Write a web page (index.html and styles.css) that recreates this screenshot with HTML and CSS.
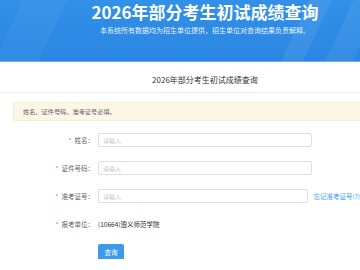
FILE: index.html
```html
<!DOCTYPE html>
<html lang="zh-CN">
<head>
<meta charset="utf-8">
<title>2026年部分考生初试成绩查询</title>
<link rel="stylesheet" href="styles.css">
</head>
<body>
<div class="page">
  <header class="banner">
    <h1 class="banner-title">2026年部分考生初试成绩查询</h1>
    <p class="banner-sub">本系统所有数据均为招生单位提供，招生单位对查询结果负责解释。</p>
  </header>
  <div class="card-title">2026年部分考生初试成绩查询</div>
  <div class="alert">姓名、证件号码、准考证号必填。</div>
  <form class="form">
    <div class="row">
      <label class="label"><span class="req">*</span>姓名：</label>
      <input class="input" type="text" placeholder="请输入">
    </div>
    <div class="row">
      <label class="label"><span class="req">*</span>证件号码：</label>
      <input class="input" type="text" placeholder="请输入">
    </div>
    <div class="row">
      <label class="label"><span class="req">*</span>准考证号：</label>
      <input class="input" type="text" placeholder="请输入">
      <a class="link" href="#">忘记准考证号(?)</a>
    </div>
    <div class="row">
      <label class="label"><span class="req">*</span>报考单位：</label>
      <span class="value">(10664)遵义师范学院</span>
    </div>
    <div class="row">
      <span class="label"></span>
      <button class="btn" type="button">查询</button>
    </div>
  </form>
</div>
</body>
</html>
```
FILE: styles.css
```css
html, body {
  margin: 0;
  padding: 0;
  background: #fff;
  overflow: hidden;
  font-family: "Noto Sans CJK SC", "Noto Sans", sans-serif;
}
.page {
  width: 360px;
  overflow: hidden;
}
.banner {
  height: 62px;
  box-sizing: border-box;
  padding: 3px 0 0 50px;
  text-align: center;
  color: #fff;
  background:
    linear-gradient(115deg, rgba(255,255,255,0) 0, rgba(255,255,255,0) 280px, rgba(255,255,255,0.07) 281px, rgba(255,255,255,0.07) 300px, rgba(255,255,255,0) 301px),
    linear-gradient(115deg, rgba(255,255,255,0) 0, rgba(255,255,255,0) 320px, rgba(255,255,255,0.06) 321px, rgba(255,255,255,0.06) 345px, rgba(255,255,255,0) 346px),
    linear-gradient(115deg, rgba(255,255,255,0) 0, rgba(255,255,255,0) 20px, rgba(255,255,255,0.04) 21px, rgba(255,255,255,0.04) 60px, rgba(255,255,255,0) 61px),
    linear-gradient(180deg, #3290e8 0%, #2a86e2 100%);
  border-bottom: 1px solid #6aaef0;
}
.banner-title {
  margin: 0;
  font-size: 17px;
  line-height: 17px;
  font-weight: 700;
  letter-spacing: 0;
}
.banner-sub {
  margin: 7px 0 0;
  font-size: 7px;
  line-height: 7px;
  color: rgba(255,255,255,0.9);
}
.card-title {
  padding: 14px 0 8px 50px;
  text-align: center;
  font-size: 8px;
  line-height: 8px;
  color: #333;
  border-bottom: 1px solid #eeeeee;
}
.alert {
  margin: 9px -30px 0 13px;
  height: 19px;
  box-sizing: border-box;
  padding: 0 0 0 9px;
  display: flex;
  align-items: center;
  font-size: 6.2px;
  color: #666;
  background: #fdf6e6;
  border: 1px solid #f8ecd6;
  border-radius: 2px;
}
.form {
  margin-top: 12px;
  display: flex;
  flex-direction: column;
  gap: 14px;
}
.row {
  display: flex;
  align-items: center;
  height: 14px;
}
.label {
  width: 94px;
  flex: none;
  text-align: right;
  font-size: 6.5px;
  color: #606266;
}
.req {
  color: #f56c6c;
  margin-right: 3px;
}
.input {
  margin: 0 0 0 4px;
  width: 214px;
  height: 14px;
  box-sizing: border-box;
  padding: 0 4px;
  border: 1px solid #dcdfe6;
  border-radius: 2px;
  font-family: inherit;
  font-size: 6px;
  color: #606266;
  outline: none;
  background: #fff;
}
.input::placeholder {
  color: #c0c4cc;
}
.link {
  margin-left: 6px;
  white-space: nowrap;
  font-size: 6.5px;
  color: #409eff;
  text-decoration: none;
}
.value {
  margin-left: 4px;
  font-size: 6.5px;
  color: #333;
}
.btn {
  margin: 0 0 0 4px;
  width: 26px;
  height: 16px;
  padding: 0;
  border: none;
  border-radius: 2px;
  background: #3d99ec;
  color: #fff;
  font-family: inherit;
  font-size: 6.5px;
}
```
